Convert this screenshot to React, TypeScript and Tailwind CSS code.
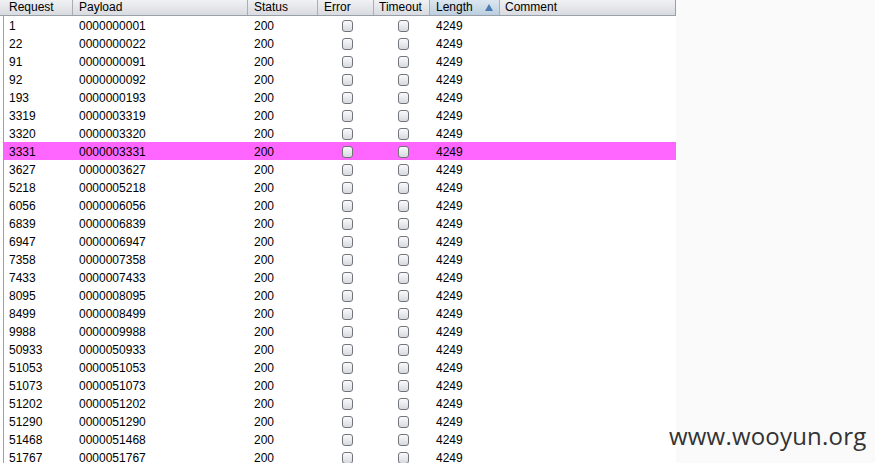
const ids = [
  1, 22, 91, 92, 193, 3319, 3320, 3331, 3627, 5218, 6056, 6839, 6947, 7358, 7433, 8095, 8499,
  9988, 50933, 51053, 51073, 51202, 51290, 51468, 51767,
];

function Box() {
  return (
    <span className="block w-[11px] h-[12px] rounded-[3px] border border-[#70757b] bg-gradient-to-b from-[#fbfbfc] to-[#d6d9dd]" />
  );
}

export default function App() {
  return (
    <div
      className="relative w-[875px] h-[463px] overflow-hidden flex bg-[#fafafa] text-[12px] text-black"
      style={{ fontFamily: '"Liberation Sans", Arial, sans-serif' }}
    >
      <div className="w-[676px] bg-white flex flex-col">
        <div className="flex h-[18px] leading-[15px] border-b border-[#9aa0a8] bg-gradient-to-b from-[#f0f1f3] to-[#d8dbe0]">
          <div className="w-[73px] pl-[9px] border-r border-[#a9aeb5]">Request</div>
          <div className="w-[175px] pl-[6px] border-r border-[#a9aeb5]">Payload</div>
          <div className="w-[70px] pl-[6px] border-r border-[#a9aeb5]">Status</div>
          <div className="w-[56px] pl-[6px] border-r border-[#a9aeb5]">Error</div>
          <div className="w-[56px] pl-[5px] border-r border-[#a9aeb5]">Timeout</div>
          <div className="w-[70px] pl-[6px] pr-[6px] flex justify-between items-start border-r border-[#a9aeb5] bg-gradient-to-b from-[#dce7f0] to-[#bccfdf]">
            <span>Length</span>
            <svg width="8" height="7" viewBox="0 0 8 7" className="mt-[4px]">
              <path d="M4 0 L8 7 L0 7 Z" fill="#4a7bb0" />
            </svg>
          </div>
          <div className="flex-1 pl-[5px] border-r border-[#9aa0a8]">Comment</div>
        </div>
        <div className="flex-1 ml-[3px] border-l border-[#a0a0a0]">
          {ids.map((n) => (
            <div
              key={n}
              className={`flex h-[18px] items-center pt-[1px] ${n === 3331 ? "bg-[#ff66ff]" : ""}`}
            >
              <div className="w-[69px] pl-[5px]">{n}</div>
              <div className="w-[175px] pl-[6px]">{String(n).padStart(10, "0")}</div>
              <div className="w-[70px] pl-[6px]">200</div>
              <div className="w-[56px] pl-[24px]">
                <Box />
              </div>
              <div className="w-[56px] pl-[24px]">
                <Box />
              </div>
              <div className="w-[70px] pl-[6px]">4249</div>
            </div>
          ))}
        </div>
      </div>
      <div className="flex-1" />
      <div
        className="absolute left-[669px] top-[418px] text-[24px] text-[#333] tracking-[0.2px]"
        style={{ fontFamily: '"Open Sans", "DejaVu Sans", sans-serif' }}
      >
        www.wooyun.org
      </div>
    </div>
  );
}
